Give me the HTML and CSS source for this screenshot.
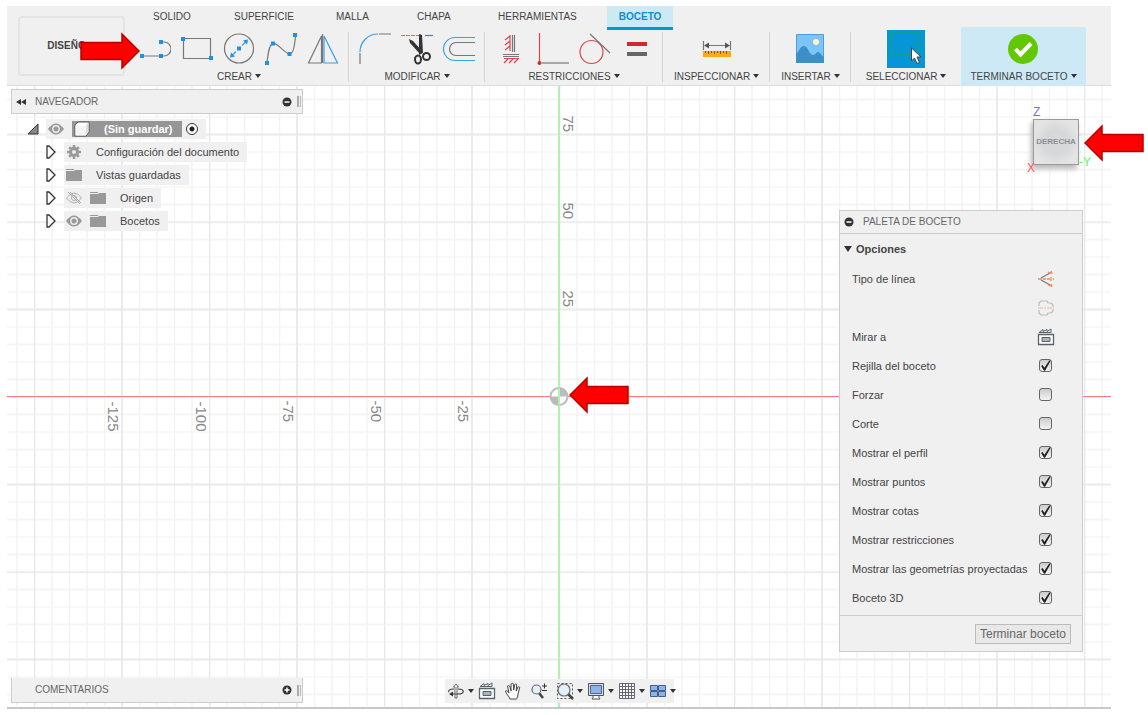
FILE: index.html
```html
<!DOCTYPE html>
<html lang="es">

<head>
    <meta charset="UTF-8">
    <meta name="viewport" content="width=device-width, initial-scale=1.0">
    <title>Boceto</title>
    <link rel="stylesheet" href="styles.css">
</head>

<body>
    <header class="toolbar">
        <button class="workspace" type="button">DISEÑO</button>
        <div class="toolbar-main">
            <nav class="tabs">
                <button class="tab" type="button">SOLIDO</button>
                <button class="tab" type="button">SUPERFICIE</button>
                <button class="tab" type="button">MALLA</button>
                <button class="tab" type="button">CHAPA</button>
                <button class="tab" type="button">HERRAMIENTAS</button>
                <button class="tab active" type="button">BOCETO</button>
            </nav>
            <div class="ribbon">
                <div class="group">
                    <div class="tools">
                        <button class="tool" type="button" aria-label="Línea">
                            <svg viewBox="0 0 32 32"><path class="g" d="M3 23H22M22 9h3a7 7 0 0 1 0 14h-3" /><path class="dot" d="M1 21h4v4H1zM20 21h4v4h-4zM20 7h4v4h-4z" /></svg>
                        </button>
                        <button class="tool" type="button" aria-label="Rectángulo">
                            <svg viewBox="0 0 32 32"><path class="g" d="M2.500 5.500h27v20h-27z" /><path class="dot" d="M0 4h4v4H0zM28 23h4v4h-4z" /></svg>
                        </button>
                        <button class="tool" type="button" aria-label="Círculo">
                            <svg viewBox="0 0 32 32"><circle class="g" cx="16" cy="15.500" r="14.500" /><path class="b" d="M9 22.500l4-4M19 12.500l4-4" /><path class="dot" d="M14 13.500h4v4h-4zM25 6.500l-1 5-4-4zM7 24.500l1-5 4 4z" /></svg>
                        </button>
                        <button class="tool" type="button" aria-label="Spline">
                            <svg viewBox="0 0 32 32"><path class="g" d="M2 30C3 20 4 12 8 10.500S20 21 24.500 21 30 10 30.500 2" /><path class="dot" d="M0 28h4v4H0zM6 8.500h4v4H6zM22.500 19h4v4h-4zM28 0h4v4h-4z" /></svg>
                        </button>
                        <button class="tool" type="button" aria-label="Simetría">
                            <svg viewBox="0 0 32 32"><path class="g" d="M14.500 3v27H1.500z" /><path class="b" d="M17 3v27h13.500z" /><path class="g" d="M15.500 1v29" /></svg>
                        </button>
                    </div>
                    <button class="menu" type="button">CREAR</button>
                </div>
                <div class="group">
                    <div class="tools">
                        <button class="tool" type="button" aria-label="Empalme">
                            <svg viewBox="0 0 32 32"><path class="g" d="M1 31V20M20 1h12" /><path class="b" d="M1 19C1 9 9 1 19 1" /></svg>
                        </button>
                        <button class="tool" type="button" aria-label="Recortar">
                            <svg viewBox="0 0 32 32"><path class="b" stroke-dasharray="4 1" d="M0 2.500h19" /><path class="g" d="M24 2.500h8" /><path fill="#333" d="M8 6l4 2 10 11-3 2L9 10zM18 1l3 1 1 18-4 2z" /><g fill="none" stroke="#333" stroke-width="2"><ellipse cx="17" cy="26.500" rx="3" ry="4" /><circle cx="25.500" cy="23.500" r="3.500" /></g></svg>
                        </button>
                        <button class="tool" type="button" aria-label="Desfase">
                            <svg viewBox="0 0 32 32"><path class="b" d="M32 4.500H12a11.500 11.500 0 0 0 0 23h20" /><path class="g" d="M32 9.500H13a6.500 6.500 0 0 0 0 13h19" /></svg>
                        </button>
                    </div>
                    <button class="menu" type="button">MODIFICAR</button>
                </div>
                <div class="group">
                    <div class="tools">
                        <button class="tool" type="button" aria-label="Horizontal/Vertical">
                            <svg viewBox="0 0 32 32"><path class="g" d="M17.500 2v17M19.500 2v17M8 21.500h16M8 23.500h16" /><path class="r" d="M15 2v16M10 7l5-4M10 12l5-4M10 17l5-4M9 25.500h15M9 30l4-4M14 30l4-4M19 30l4-4" /></svg>
                        </button>
                        <button class="tool" type="button" aria-label="Perpendicular">
                            <svg viewBox="0 0 32 32"><path class="r" d="M2.500 0v29" /><circle cx="2.500" cy="30" r="2" fill="#d0282d" /><path class="g" d="M5 30h27" /></svg>
                        </button>
                        <button class="tool" type="button" aria-label="Tangente">
                            <svg viewBox="0 0 32 32"><circle class="r" cx="12.500" cy="19" r="11.500" /><path class="g" d="M11 1l20 19" /></svg>
                        </button>
                        <button class="tool" type="button" aria-label="Igual">
                            <svg viewBox="0 0 32 32"><path fill="#d0282d" d="M6 9h20v4H6z" /><path fill="#666" d="M6 19h20v4H6z" /></svg>
                        </button>
                    </div>
                    <button class="menu" type="button">RESTRICCIONES</button>
                </div>
                <div class="group wide">
                    <div class="tools">
                        <button class="tool" type="button" aria-label="Medir">
                            <svg viewBox="0 0 32 32"><path class="g" d="M2.500 8v9M29.500 8v9M5 12.500h22" /><path fill="#555" d="M3 12.500l5-3v6zM29 12.500l-5-3v6z" /><path fill="#ffab0f" d="M2 18h28v6H2z" /><path stroke="#7a5200" d="M4.500 18v2M7.500 18v3M10.500 18v2M13.500 18v3M16.500 18v2M19.500 18v3M22.500 18v2M25.500 18v3" /></svg>
                        </button>
                    </div>
                    <button class="menu" type="button">INSPECCIONAR</button>
                </div>
                <div class="group wide">
                    <div class="tools">
                        <button class="tool" type="button" aria-label="Imagen">
                            <svg viewBox="0 0 32 32"><path fill="#7cc4f8" stroke="#4f9fd6" d="M2.500 1.500h27v28h-27z" /><circle cx="22" cy="9" r="3" fill="#fdf6c9" /><path fill="#3d8fc7" d="M2 21c3-2 4-8 8-8s5 9 9 9c3 0 3-3 5-3s3 3 6 5v6H2z" /></svg>
                        </button>
                    </div>
                    <button class="menu" type="button">INSERTAR</button>
                </div>
                <div class="group select">
                    <div class="tools">
                        <button class="tool selected" type="button" aria-label="Seleccionar">
                            <svg viewBox="0 0 36 38"><path fill="none" stroke="#18a561" stroke-width="1.500" stroke-dasharray="4 2" d="M3 3h27v21H3z" /><path fill="#fff" stroke="#444" d="M23.500 18v13l3-3 2.500 5.500 2.500-1-2.500-5.500h4z" /></svg>
                        </button>
                    </div>
                    <button class="menu" type="button">SELECCIONAR</button>
                </div>
                <div class="group finish">
                    <div class="tools">
                        <button class="tool" type="button" aria-label="Terminar">
                            <svg viewBox="0 0 32 32"><circle cx="16" cy="16" r="15" fill="#62c804" /><path fill="none" stroke="#fff" stroke-width="4" d="M8.500 16l5 5.500 10.500-11" /></svg>
                        </button>
                    </div>
                    <button class="menu" type="button">TERMINAR BOCETO</button>
                </div>
            </div>
        </div>
        <svg class="arrow arrow-line" viewBox="0 0 60 38"><path d="M1 10.500h41V2l17 17-17 17v-8.500H1z" /></svg>
    </header>

    <main class="canvas">
        <!-- sketch grid, everything is drawn from the origin -->
        <svg class="grid">
            <defs>
                <pattern id="minor" width="35" height="35" patternUnits="userSpaceOnUse">
                    <path fill="none" stroke="#f3f3f3" stroke-width="1.500" d="M0 .5h35M0 18h35M.5 0v35M18 0v35" />
                </pattern>
                <pattern id="major" width="175" height="175" patternUnits="userSpaceOnUse">
                    <path fill="none" stroke="#e8e8e8" stroke-width="1.500" d="M0 .5h175M0 88h175M.5 0v175M88 0v175" />
                </pattern>
            </defs>
            <svg x="50%" y="50%" overflow="visible">
                <path fill="url(#minor)" d="M-2100-2100h4200v4200h-4200z" />
                <path fill="url(#major)" d="M-2100-2100h4200v4200h-4200z" />
                <path stroke="#b4efb4" stroke-width="2" d="M0-2100v4200" />
                <path stroke="#f57f7f" d="M-2100 0h4200" />
                <g class="scale">
                    <text transform="translate(-451 5) rotate(90)">-125</text>
                    <text transform="translate(-363 5) rotate(90)">-100</text>
                    <text transform="translate(-276 4) rotate(90)">-75</text>
                    <text transform="translate(-188 4) rotate(90)">-50</text>
                    <text transform="translate(-101 4) rotate(90)">-25</text>
                    <text transform="translate(4 -281) rotate(90)">75</text>
                    <text transform="translate(4 -194) rotate(90)">50</text>
                    <text transform="translate(4 -106) rotate(90)">25</text>
                </g>
                <circle r="8.500" fill="#fff" stroke="#bbb" stroke-width="2" />
                <path fill="#bbb" d="M0 0V8A8 8 0 0 1-8 0zM0 0V-8A8 8 0 0 1 8 0z" />
                <path stroke="#b4efb4" stroke-width="2" d="M0-9v18" />
            </svg>
        </svg>

        <div class="top">
            <section class="browser">
                <div class="panel-bar">
                    <svg class="ico-collapse" viewBox="0 0 10 8"><path fill="#333" d="M5 1v6L0 4zM10 1v6L5 4z" /></svg>
                    <span class="panel-title">NAVEGADOR</span>
                    <button class="round" type="button" aria-label="Contraer"><svg viewBox="0 0 10 10"><circle cx="5" cy="5" r="4.500" fill="#333" /><path stroke="#fff" stroke-width="1.500" d="M2.500 5h5" /></svg></button>
                    <i class="grip"></i>
                </div>
                <ul class="tree">
                    <li class="root">
                        <svg class="twist" viewBox="0 0 12 12"><path fill="#888" stroke="#333" d="M11 1v10H1z" /></svg>
                        <div class="node">
                            <svg class="eye" viewBox="0 0 16 12"><path fill="#999" d="M0 6q8-11 16 0-8 11-16 0z" /><circle cx="8" cy="6" r="3.200" fill="#999" stroke="#eee" stroke-width="1.400" /></svg>
                            <div class="name">
                                <svg class="cube" viewBox="0 0 18 16"><path fill="#fff" stroke="#555" d="M2 4l3-3h11v10l-3 4H2z" /><path fill="#ddd" d="M13 4l2.500-2.500V11L13 14z" /><path fill="#f2f4f8" d="M2.500 4.500H13v10H2.500z" /></svg>
                                <span>(Sin guardar)</span>
                            </div>
                            <input class="active-doc" type="radio" name="doc" aria-label="Activar" checked>
                        </div>
                    </li>
                    <li>
                        <svg class="twist" viewBox="0 0 12 14"><path fill="#fff" stroke="#333" stroke-width="1.300" d="M2 1h2l6 6-6 6H2z" /></svg>
                        <div class="node">
                            <svg class="eye" viewBox="0 0 16 16"><circle cx="8" cy="8" r="4" fill="none" stroke="#999" stroke-width="3.500" /><path stroke="#999" stroke-width="3" d="M8 0v3M8 13v3M0 8h3M13 8h3M2.500 2.500l2 2M11.500 11.500l2 2M2.500 13.500l2-2M11.500 4.500l2-2" /></svg>
                            <span>Configuración del documento</span>
                        </div>
                    </li>
                    <li>
                        <svg class="twist" viewBox="0 0 12 14"><path fill="#fff" stroke="#333" stroke-width="1.300" d="M2 1h2l6 6-6 6H2z" /></svg>
                        <div class="node">
                            <svg class="eye" viewBox="0 0 16 12"><path fill="#999" d="M0 0h8v1H0zM0 2h8l1-1h7v11H0z" /></svg>
                            <span>Vistas guardadas</span>
                        </div>
                    </li>
                    <li>
                        <svg class="twist" viewBox="0 0 12 14"><path fill="#fff" stroke="#333" stroke-width="1.300" d="M2 1h2l6 6-6 6H2z" /></svg>
                        <div class="node">
                            <svg class="eye" viewBox="0 0 16 12"><path fill="none" stroke="#aaa" d="M.5 6q7.500-10 15 0-7.500 10-15 0zM2 0l12 12M4 0l11 11" /><circle cx="8" cy="6" r="2.500" fill="none" stroke="#aaa" /></svg>
                            <svg class="eye" viewBox="0 0 16 12"><path fill="#999" d="M0 0h8v1H0zM0 2h8l1-1h7v11H0z" /></svg>
                            <span>Origen</span>
                        </div>
                    </li>
                    <li>
                        <svg class="twist" viewBox="0 0 12 14"><path fill="#fff" stroke="#333" stroke-width="1.300" d="M2 1h2l6 6-6 6H2z" /></svg>
                        <div class="node">
                            <svg class="eye" viewBox="0 0 16 12"><path fill="#999" d="M0 6q8-11 16 0-8 11-16 0z" /><circle cx="8" cy="6" r="3.200" fill="#999" stroke="#eee" stroke-width="1.400" /></svg>
                            <svg class="eye" viewBox="0 0 16 12"><path fill="#999" d="M0 0h8v1H0zM0 2h8l1-1h7v11H0z" /></svg>
                            <span>Bocetos</span>
                        </div>
                    </li>
                </ul>
            </section>

            <div class="side">
                <div class="viewcube">
                    <button class="face" type="button">DERECHA</button>
                    <span class="axis axis-z">Z</span>
                    <span class="axis axis-x">X</span>
                    <span class="axis axis-y">-Y</span>
                </div>

                <form class="palette">
                    <div class="palette-head">
                        <button class="round" type="button" aria-label="Contraer"><svg viewBox="0 0 10 10"><circle cx="5" cy="5" r="4.500" fill="#333" /><path stroke="#fff" stroke-width="1.500" d="M2.500 5h5" /></svg></button>
                        <span>PALETA DE BOCETO</span>
                    </div>
                    <div class="options-title">Opciones</div>
                    <div class="option">
                        <span>Tipo de línea</span>
                        <button class="icon-btn" type="button" aria-label="Construcción"><svg viewBox="0 0 18 18"><path class="g" d="M4 8l9-5M4 10l9 5" /><path fill="none" stroke="#f08a4b" stroke-width="1.300" d="M1 9h4M6 9h3M10 9h3M14 7v4M16 9h1M11 2l3 1M14 1l1 3M11 15l3 1M14 14l1 3" /></svg></button>
                    </div>
                    <div class="option">
                        <span></span>
                        <button class="icon-btn" type="button" aria-label="Línea central"><svg viewBox="0 0 18 18"><path fill="none" stroke="#bbb" stroke-width="1.200" d="M2 7V4l2-2h6l1 2h3l2 2v2M2 11v3l2 2h6l1-2h3l2-2v-2" /><path stroke="#f4b78e" stroke-width="1.200" stroke-dasharray="5 1 2 1" d="M1 9h16" /></svg></button>
                    </div>
                    <div class="option">
                        <span>Mirar a</span>
                        <button class="icon-btn" type="button" aria-label="Mirar a"><svg viewBox="0 0 18 18"><path fill="#fff" stroke="#59626b" stroke-width="1.300" d="M1.500 6.500h15v10h-15z" /><path fill="#aab4be" stroke="#59626b" d="M5 9.500h8v4H5z" /><path fill="none" stroke="#59626b" d="M2 4.500l4-3v2l4-2v2l4-2.500v3.500z" /></svg></button>
                    </div>
                    <div class="option"><label for="rejilla">Rejilla del boceto</label><input id="rejilla" type="checkbox" checked></div>
                    <div class="option"><label for="forzar">Forzar</label><input id="forzar" type="checkbox"></div>
                    <div class="option"><label for="corte">Corte</label><input id="corte" type="checkbox"></div>
                    <div class="option"><label for="perfil">Mostrar el perfil</label><input id="perfil" type="checkbox" checked></div>
                    <div class="option"><label for="puntos">Mostrar puntos</label><input id="puntos" type="checkbox" checked></div>
                    <div class="option"><label for="cotas">Mostrar cotas</label><input id="cotas" type="checkbox" checked></div>
                    <div class="option"><label for="restricciones">Mostrar restricciones</label><input id="restricciones" type="checkbox" checked></div>
                    <div class="option"><label for="geometrias">Mostrar las geometrías proyectadas</label><input id="geometrias" type="checkbox" checked></div>
                    <div class="option"><label for="boceto3d">Boceto 3D</label><input id="boceto3d" type="checkbox" checked></div>
                    <div class="palette-foot">
                        <button class="done" type="button">Terminar boceto</button>
                    </div>
                </form>
            </div>
        </div>

        <div class="bottom">
            <div class="panel-bar comments">
                <span class="panel-title">COMENTARIOS</span>
                <button class="round" type="button" aria-label="Expandir"><svg viewBox="0 0 10 10"><circle cx="5" cy="5" r="4.500" fill="#333" /><path stroke="#fff" stroke-width="1.500" d="M2.500 5h5M5 2.500v5" /></svg></button>
                <i class="grip"></i>
            </div>
            <div class="navbar">
                <button class="nav drop" type="button" aria-label="Orbitar"><svg viewBox="0 0 18 18"><path fill="#fff" stroke="#666" d="M8 5v11h2V5h1.500L9 2 6.500 5z" /><path fill="none" stroke="#444" stroke-width="1.200" d="M11 7c7 0 7 5 0 5H5M7 7C2 7 1 9 2 10" /><path fill="#333" d="M2 12l4-2.500v5z" /></svg></button>
                <button class="nav" type="button" aria-label="Mirar a"><svg viewBox="0 0 18 18"><path fill="#fff" stroke="#59626b" stroke-width="1.300" d="M1.500 6.500h15v10h-15z" /><path fill="#aab4be" stroke="#59626b" d="M5 9.500h8v4H5z" /><path fill="none" stroke="#59626b" d="M2 4.500l4-3v2l4-2v2l4-2.500v3.500z" /></svg></button>
                <button class="nav" type="button" aria-label="Encuadre"><svg viewBox="0 0 18 18"><path fill="#fff" stroke="#444" d="M6 17c-1-3-4-5-4.500-8 1-1 2 0 3.500 2L3.500 4c1-1 2-.5 2.500 1l1 4L7 2c1-1 2-1 2.300 0l.4 6 1-5.500c1-1 2-.5 2 .5l-.5 6 1.800-4c1-.7 2 0 1.500 1L14 12c0 3-1 4-1.500 5z" /></svg></button>
                <button class="nav" type="button" aria-label="Zoom"><svg viewBox="0 0 18 18"><path stroke="#444" stroke-width="2.500" d="M9 11l4 5" /><circle cx="6.500" cy="7.500" r="4.500" fill="#e3f1f6" stroke="#667" stroke-width="1.200" /><path stroke="#333" d="M12 4h5M14.500 1.500v5M12 8.500h5" /></svg></button>
                <button class="nav drop" type="button" aria-label="Ajustar"><svg viewBox="0 0 18 18"><path fill="none" stroke="#555" stroke-dasharray="2 2" d="M1.500 1.500h15v15h-15z" /><path stroke="#444" stroke-width="2.500" d="M12 12l5 5" /><circle cx="8" cy="8" r="6" fill="#e3f1f6" stroke="#667" stroke-width="1.200" /></svg></button>
                <button class="nav drop" type="button" aria-label="Visualización"><svg viewBox="0 0 18 18"><path fill="#ddd" stroke="#555" d="M1.500 1.500h15v12h-15z" /><path fill="#8db4e2" stroke="#456a9c" d="M3.500 3.500h11v8h-11z" /><path fill="#fff" stroke="#555" d="M6 13.500h6v2l1 1.500H5l1-1.500z" /></svg></button>
                <button class="nav drop" type="button" aria-label="Rejilla"><svg viewBox="0 0 18 18"><path fill="#fff" stroke="#667" d="M1.500 1.500h15v15h-15zM4.500 1v16M7.500 1v16M10.500 1v16M13.500 1v16M1 4.500h16M1 7.500h16M1 10.500h16M1 13.500h16" /></svg></button>
                <button class="nav drop" type="button" aria-label="Ventanas"><svg viewBox="0 0 18 18"><path fill="#8db4e2" stroke="#3f5f8f" d="M1.500 3.500h7v5h-7zM9.500 3.500h7v5h-7zM1.500 9.500h7v5h-7zM9.500 9.500h7v5h-7z" /></svg></button>
            </div>
        </div>

        <svg class="arrow arrow-origin" viewBox="0 0 60 38"><path d="M59 10.500H18V2L1 19l17 17v-8.500h41z" /></svg>
        <svg class="arrow arrow-cube" viewBox="0 0 60 38"><path d="M59 10.500H18V2L1 19l17 17v-8.500h41z" /></svg>
    </main>
</body>

</html>
```
FILE: styles.css
```css
* {
    padding: 0;
    margin: 0;
    box-sizing: border-box;
}

body {
    display: flex;
    flex-direction: column;
    min-height: 100vh;
    padding: 6px 37px 6px 7px;
    background: #fff;
    color: #444;
    font: 11px/14px "Liberation Sans", Arial, sans-serif;
}

button {
    border: 0;
    background: none;
    color: inherit;
    font: inherit;
    cursor: pointer;
}

svg {
    display: block;
}

ul {
    list-style: none;
}

/* toolbar */

.toolbar {
    position: relative;
    display: flex;
    height: 80px;
    background: #f0f0f0;
    border-bottom: 1px solid #ddd;
    font-size: 10px;
}

.workspace {
    width: 107px;
    height: 60px;
    margin: 10px 9px 0 11px;
    padding-right: 10px;
    border: 2px solid #e4e4e4;
    border-radius: 4px;
    font-weight: bold;
}

.toolbar-main {
    flex: 1;
}

.tabs {
    display: flex;
    height: 24px;
    padding-left: 7px;
}

.tab {
    min-width: 63px;
    padding: 0 12px 2px;
    margin-right: 18px;
    text-align: left;
}

.tab.active {
    background: #cde9f5;
    border-bottom: 3px solid #0696d7;
    padding-bottom: 0;
    color: #0a8fd0;
    font-weight: bold;
}

.ribbon {
    display: flex;
    height: 59px;
    margin-top: -3px;
}

.group {
    position: relative;
    display: flex;
    flex-direction: column;
    align-items: center;
    padding: 1px 5px 0;
}

.group:first-child {
    padding-left: 0;
}

.group.wide {
    padding: 1px 11px 0;
}

.group.select {
    padding: 1px 15px 0;
}

/* divider between groups */
.group::after {
    content: "";
    position: absolute;
    right: 0;
    top: 5px;
    width: 1px;
    height: 50px;
    background: #d4d4d4;
}

.group:nth-last-child(-n+2)::after {
    display: none;
}

.tools {
    display: flex;
    align-items: center;
    height: 41px;
}

.tool {
    width: 42px;
    padding: 0 5px;
}

.tool svg {
    width: 32px;
    height: 32px;
}

.tool.selected {
    width: 38px;
    padding: 0 1px;
    background: #0696d7;
}

.tool.selected svg {
    width: 36px;
    height: 38px;
}

.menu {
    line-height: 16px;
    white-space: nowrap;
}

.menu::after {
    content: "";
    display: inline-block;
    margin-left: 3px;
    vertical-align: 2px;
    border: 3px solid transparent;
    border-top: 4px solid #333;
    border-bottom: 0;
}

.group.finish {
    padding: 1px 9px 0;
    background: #cde9f5;
}

.g, .b, .r {
    fill: none;
    stroke: #777;
    stroke-width: 1.2;
}

.b {
    stroke: #3aa0e8;
}

.r {
    stroke: #d8474b;
}

.dot {
    fill: #1e90e6;
}

/* canvas */

.canvas {
    position: relative;
    flex: 1;
    display: flex;
    flex-direction: column;
    border-bottom: 2px solid #c8c8c8;
}

.grid {
    position: absolute;
    width: 100%;
    height: 100%;
    overflow: hidden;
}

.scale {
    fill: #888;
    font-size: 15px;
}

.top {
    position: relative;
    flex: 1;
    display: flex;
    justify-content: space-between;
    align-items: flex-start;
}

.browser {
    padding: 3px 0 0 4px;
}

.panel-bar {
    display: flex;
    align-items: center;
    width: 292px;
    height: 25px;
    padding: 0 1px 0 4px;
    border: 1px solid #ccc;
    background: #f0f0f0;
    color: #666;
    font-size: 10px;
}

.ico-collapse {
    width: 10px;
    height: 8px;
    margin-right: 9px;
}

.panel-title {
    flex: 1;
}

.round svg {
    width: 10px;
    height: 10px;
}

.grip {
    width: 4px;
    height: 11px;
    margin-left: 5px;
    border-left: 2px solid #aaa;
    border-right: 1px solid #bbb;
}

.tree {
    display: flex;
    flex-direction: column;
    gap: 3px;
    padding: 5px 0 0 34px;
}

.tree li {
    display: flex;
    align-items: center;
    height: 20px;
}

.tree .root {
    margin-left: -18px;
}

.twist {
    width: 12px;
    height: 14px;
    margin-right: 7px;
}

.node {
    display: flex;
    align-items: center;
    gap: 8px;
    height: 20px;
    padding: 0 8px 0 2px;
    background: #f0f0f0;
}

.node > span {
    margin-left: 6px;
}

.eye {
    width: 16px;
    height: 14px;
}

.name {
    display: flex;
    align-items: center;
    gap: 12px;
    height: 16px;
    padding-right: 10px;
    margin-right: -4px;
    background: #969696;
    color: #fff;
    font-weight: bold;
}

.cube {
    width: 20px;
    height: 16px;
}

.active-doc {
    appearance: none;
    width: 12px;
    height: 12px;
    border: 1px solid #333;
    border-radius: 50%;
    background: radial-gradient(#222 0 2px, #fff 3px);
}

/* view cube */

.side {
    display: flex;
    flex-direction: column;
    align-items: flex-end;
    padding-right: 28px;
}

.viewcube {
    position: relative;
    margin: 33px 4px 45px 0;
}

.face {
    width: 46px;
    height: 46px;
    border: 1px solid #999;
    background: radial-gradient(#d6d8da 40%, #e4e4e4 75%);
    box-shadow: -2px 4px 5px #bbb;
    color: #8b9096;
    font-size: 8px;
    font-weight: bold;
    display: block;
}

.axis {
    position: absolute;
    font-size: 12px;
}

.axis-z {
    left: 0;
    top: -14px;
    color: #6f6fff;
}

.axis-x {
    left: -6px;
    bottom: -10px;
    color: #f55;
}

.axis-y {
    right: -12px;
    bottom: -4px;
    color: #5f5;
}

/* palette */

.palette {
    width: 244px;
    border: 1px solid #ccc;
    background: #f0f0f0;
}

.palette-head {
    display: flex;
    align-items: center;
    gap: 9px;
    height: 23px;
    padding-left: 4px;
    border-bottom: 1px solid #ccc;
    color: #666;
    font-size: 10px;
}

.options-title {
    display: flex;
    align-items: center;
    height: 30px;
    padding-left: 4px;
    font-weight: bold;
}

.options-title::before {
    content: "";
    margin-right: 4px;
    border: 4px solid transparent;
    border-top: 6px solid #333;
    border-bottom: 0;
}

.option {
    display: flex;
    align-items: center;
    justify-content: space-between;
    height: 29px;
    padding: 0 30px 0 12px;
}

.icon-btn {
    margin-right: -3px;
}

.icon-btn svg {
    width: 18px;
    height: 18px;
}

.option input {
    appearance: none;
    width: 13px;
    height: 13px;
    border: 1px solid #666;
    border-radius: 3px;
    background: linear-gradient(#ccc, #f4f4f4);
}

.option input:checked::before {
    content: "";
    display: block;
    width: 11px;
    height: 11px;
    background: #222;
    clip-path: polygon(10% 55%, 24% 45%, 40% 70%, 84% 5%, 98% 5%, 46% 98%, 36% 98%);
}

.palette-foot {
    display: flex;
    justify-content: flex-end;
    padding: 8px 11px 7px;
    margin-top: 3px;
    border-top: 1px solid #ccc;
}

.done {
    height: 20px;
    padding: 0 4px;
    border: 1px solid #bbb;
    background: #e8e8e8;
    color: #666;
    font-size: 12px;
}

/* bottom bar */

.bottom {
    position: relative;
    display: grid;
    grid-template-columns: 1fr auto 1fr;
    align-items: center;
    padding: 0 4px 4px;
}

.comments {
    padding-left: 23px;
    border-top: 0;
}

.navbar {
    display: flex;
    align-items: center;
    gap: 8px;
    height: 24px;
    padding: 0 2px;
    background: #f0f0f0;
}

.nav {
    display: flex;
    align-items: center;
}

.nav svg {
    width: 18px;
    height: 18px;
}

.nav.drop::after {
    content: "";
    margin: 0 -4px 0 3px;
    border: 3px solid transparent;
    border-top: 4px solid #333;
    border-bottom: 0;
}

/* red pointers */

.arrow {
    position: absolute;
    width: 60px;
    height: 38px;
    fill: #f00;
    stroke: #b80000;
    stroke-width: 1.5;
}

.arrow-line {
    left: 73px;
    top: 26px;
}

.arrow-origin {
    left: calc(50% + 10px);
    top: calc(50% - 21px);
}

.arrow-cube {
    right: -33px;
    top: 38px;
}
```
